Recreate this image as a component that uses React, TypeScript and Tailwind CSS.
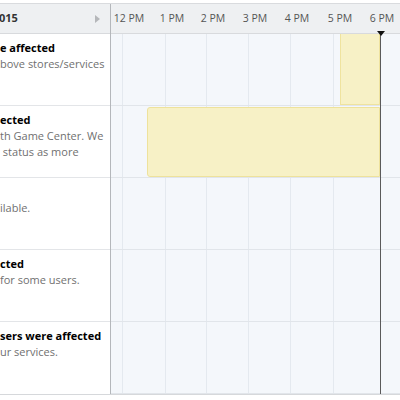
import React from "react";

const rows = [
  { title: "e affected", lines: ["bove stores/services"] },
  { title: "ected", lines: ["th Game Center. We", " status as more"] },
  { title: "", lines: ["ilable."] },
  { title: "cted", lines: ["for some users."] },
  { title: "sers were affected", lines: ["ur services."] },
];

const hours = ["12 PM", "1 PM", "2 PM", "3 PM", "4 PM", "5 PM", "6 PM"];
const gridX = [11, 54, 95, 137, 179, 222, 264];

export default function App() {
  return (
    <div className="w-[400px] h-[400px] bg-white pt-[3px] overflow-hidden" style={{ fontFamily: "'Open Sans', 'DejaVu Sans', sans-serif" }}>
      <div className="flex border-t border-[#d9dbde] h-[392px] border-b border-b-[#d6d8db]">
        {/* left list */}
        <div className="w-[111px] shrink-0 border-r border-[#b4b7bb] flex flex-col overflow-hidden">
          <div className="h-[30px] bg-[#eef0f2] border-b border-[#d8dadd] flex items-center justify-between pr-[10px]">
            <span className="text-[11px] font-bold text-[#333] -ml-[1px]">015</span>
            <span className="w-0 h-0 border-y-[4px] border-y-transparent border-l-[5px] border-l-[#b5b7ba]" />
          </div>
          {rows.map((r, i) => (
            <div key={i} className="h-[72px] border-b border-[#e3e5e8] last:border-b-0 pt-[6px] leading-[16px] text-[11px] whitespace-pre">
              <div className="font-bold text-black h-[16px]">{r.title}</div>
              {r.lines.map((l, j) => (
                <div key={j} className="text-[#707070]">{l}</div>
              ))}
            </div>
          ))}
        </div>

        {/* timeline */}
        <div className="flex-1 flex flex-col relative">
          <div className="h-[30px] bg-[#eef0f2] border-b border-[#d8dadd] relative">
            {hours.map((h, i) => (
              <span
                key={h}
                className="absolute top-[7px] text-[10.5px] text-[#555] -translate-x-1/2 whitespace-nowrap"
                style={{ left: gridX[i] + 7 }}
              >
                {h}
              </span>
            ))}
          </div>
          <div className="flex-1 bg-[#f4f7fb] relative flex flex-col">
            {gridX.slice(0, 6).map((x) => (
              <div key={x} className="absolute top-0 bottom-0 w-px bg-[#e4e9ef]" style={{ left: x }} />
            ))}
            {rows.map((_, i) => (
              <div key={i} className="h-[72px] border-b border-[#e1e5ea] last:border-b-0 relative">
                {i === 0 && (
                  <div className="absolute top-0 bottom-0 left-[229px] w-[40px] bg-[#f7f1c6] border border-[#efe39e] border-t-0" />
                )}
                {i === 1 && (
                  <div className="absolute top-[1px] bottom-0 left-[36px] w-[233px] bg-[#f7f1c6] border border-[#eee29c] rounded-l-[3px]" />
                )}
              </div>
            ))}
            <div className="absolute top-0 bottom-0 left-[269px] w-px bg-[#5a5a5a]" />
          </div>
          <span className="absolute left-[266px] top-[27px] w-0 h-0 border-x-[4px] border-x-transparent border-t-[5px] border-t-[#111]" />
        </div>
      </div>
    </div>
  );
}
